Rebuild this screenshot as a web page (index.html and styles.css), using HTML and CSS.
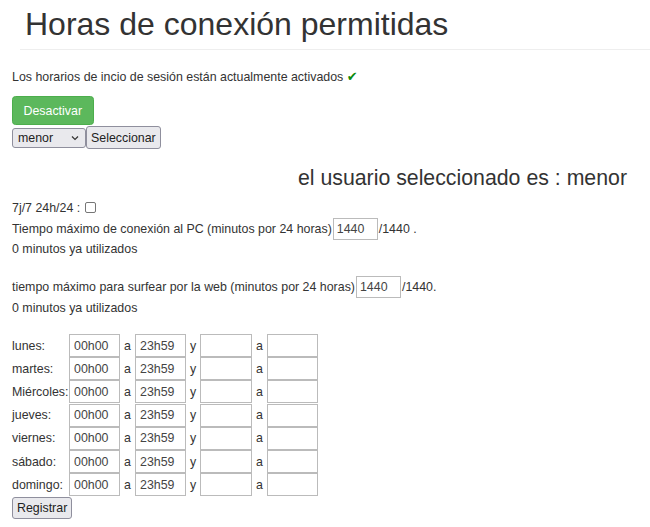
FILE: index.html
```html
<!DOCTYPE html>
<html lang="es">
<head>
<meta charset="utf-8">
<title>Horas de conexión permitidas</title>
<link rel="stylesheet" href="styles.css">
</head>
<body>
<div class="page-header">
  <h1>Horas de conexión permitidas</h1>
</div>
<div class="main">
  <p class="status">Los horarios de incio de sesión están actualmente activados <span class="ok">✔</span></p>
  <button class="btn-success" type="button">Desactivar</button>
  <form class="select-row">
    <span class="select-wrap">
      <select class="user-select"><option>menor</option></select>
      <svg class="chev" width="8" height="6" viewBox="0 0 8 6"><path d="M1 1.5 L4 4.5 L7 1.5" fill="none" stroke="#333" stroke-width="1.2"/></svg>
    </span>
    <button class="btn" type="button">Seleccionar</button>
  </form>
  <h3 class="selected">el usuario seleccionado es : menor</h3>
  <div class="line">7j/7 24h/24 : <input class="check" type="checkbox"></div>
  <div class="input-line">Tiempo máximo de conexión al PC (minutos por 24 horas)<input class="num" type="text" value="1440">/1440 .</div>
  <div class="line short">0 minutos ya utilizados</div>
  <div class="input-line second">tiempo máximo para surfear por la web (minutos por 24 horas)<input class="num" type="text" value="1440">/1440.</div>
  <div class="line">0 minutos ya utilizados</div>
  <div class="days">
    <span class="day">lunes:</span><input class="t" value="00h00"><span class="sep">a</span><input class="t" value="23h59"><span class="sep">y</span><input class="t"><span class="sep">a</span><input class="t">
    <span class="day">martes:</span><input class="t" value="00h00"><span class="sep">a</span><input class="t" value="23h59"><span class="sep">y</span><input class="t"><span class="sep">a</span><input class="t">
    <span class="day">Miércoles:</span><input class="t" value="00h00"><span class="sep">a</span><input class="t" value="23h59"><span class="sep">y</span><input class="t"><span class="sep">a</span><input class="t">
    <span class="day">jueves:</span><input class="t" value="00h00"><span class="sep">a</span><input class="t" value="23h59"><span class="sep">y</span><input class="t"><span class="sep">a</span><input class="t">
    <span class="day">viernes:</span><input class="t" value="00h00"><span class="sep">a</span><input class="t" value="23h59"><span class="sep">y</span><input class="t"><span class="sep">a</span><input class="t">
    <span class="day">sábado:</span><input class="t" value="00h00"><span class="sep">a</span><input class="t" value="23h59"><span class="sep">y</span><input class="t"><span class="sep">a</span><input class="t">
    <span class="day">domingo:</span><input class="t" value="00h00"><span class="sep">a</span><input class="t" value="23h59"><span class="sep">y</span><input class="t"><span class="sep">a</span><input class="t">
  </div>
  <button class="btn register" type="button">Registrar</button>
</div>
</body>
</html>
```
FILE: styles.css
```css
html, body {
  margin: 0;
  padding: 0;
  background: #fff;
}
body {
  font-family: "Liberation Sans", Arial, sans-serif;
  font-size: 12.4px;
  line-height: 20px;
  color: #333;
}
.page-header {
  margin: 0 0 0 20px;
  padding: 4px 0 0 5px;
  height: 45px;
  border-bottom: 1px solid #eee;
}
.page-header h1 {
  margin: 0;
  font-size: 32px;
  font-weight: 400;
  line-height: 40px;
  color: #333;
}
.main {
  padding: 0 12px;
}
.status {
  margin: 17px 0 0;
  line-height: 20px;
}
.ok {
  color: #0a8a0a;
  font-family: "DejaVu Sans", sans-serif;
  font-size: 13px;
}
.btn-success {
  display: block;
  margin-top: 9px;
  height: 29px;
  padding: 0 10.5px;
  background: #5cb85c;
  border: 1px solid #4cae4c;
  border-radius: 3.5px;
  color: #fff;
  font-family: inherit;
  font-size: 12.4px;
}
.select-row {
  display: flex;
  align-items: center;
  height: 23px;
  margin: 1px 0 0;
}
.select-wrap {
  position: relative;
  display: inline-block;
}
.user-select {
  appearance: none;
  -webkit-appearance: none;
  display: block;
  width: 74px;
  height: 20px;
  padding: 0 0 0 5px;
  margin: 0;
  background: #e9e9ed;
  border: 1px solid #8f8f9d;
  border-radius: 3px;
  font-family: inherit;
  font-size: 12.4px;
  color: #222;
}
.chev {
  position: absolute;
  right: 7px;
  top: 7px;
  pointer-events: none;
}
.btn {
  height: 23px;
  padding: 0 4px;
  margin: 0;
  background: #e9e9ed;
  border: 1px solid #8f8f9d;
  border-radius: 3px;
  font-family: inherit;
  font-size: 12.4px;
  color: #222;
}
.selected {
  margin: 16px 0 0;
  padding-right: 11px;
  text-align: right;
  font-size: 21.3px;
  font-weight: 400;
  line-height: 26px;
  color: #333;
}
.line {
  line-height: 20px;
}
.selected + .line {
  margin-top: 7px;
}
.line.short {
  line-height: 18px;
}
.check {
  appearance: none;
  -webkit-appearance: none;
  width: 11px;
  height: 11px;
  margin: 0 0 0 1px;
  vertical-align: -1px;
  border: 1px solid #767676;
  border-radius: 2px;
  background: #fff;
}
.input-line {
  display: flex;
  align-items: center;
  height: 22px;
}
.input-line.second {
  margin-top: 18px;
}
.num {
  width: 45px;
  height: 22px;
  box-sizing: border-box;
  margin: 0 1px 0 1px;
  padding: 0 3px;
  border: 1px solid #bbb;
  font-family: inherit;
  font-size: 12.4px;
  color: #444;
  background: #fff;
}
.days {
  display: grid;
  grid-template-columns: 57px 51px 15px 51px 14px 52px 15px 51px;
  grid-auto-rows: 23.2px;
  align-items: center;
  justify-content: start;
  margin-top: 16px;
}
.day {
  line-height: 20px;
  white-space: nowrap;
}
.t {
  width: 100%;
  height: 23px;
  box-sizing: border-box;
  margin: 0;
  padding: 0 4px;
  border: 1px solid #bbb;
  font-family: inherit;
  font-size: 12.4px;
  color: #444;
  background: #fff;
}
.sep {
  text-align: center;
}
.register {
  display: block;
  margin-top: 1px;
  height: 22px;
}
```
